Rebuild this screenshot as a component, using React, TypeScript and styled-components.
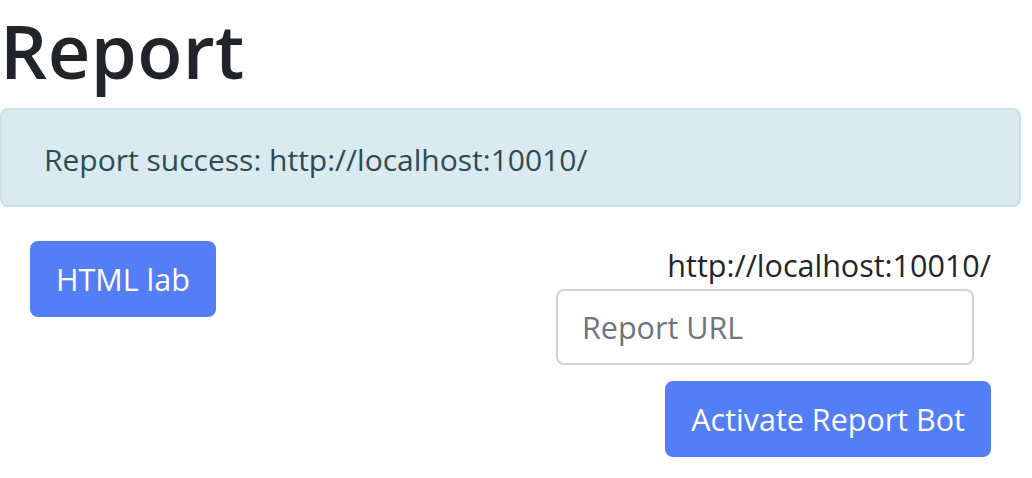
import React from "react";
import styled, { createGlobalStyle } from "styled-components";

const Global = createGlobalStyle`
  html, body { margin: 0; padding: 0; background: #ffffff; }
  body {
    font-family: "Open Sans", "Noto Sans", "Liberation Sans", sans-serif;
    color: #212529;
  }
  * { box-sizing: border-box; }
`;

const Page = styled.div`
  width: 1021px;
  display: flex;
  flex-direction: column;
`;

const Title = styled.h1`
  margin: 0 0 7px 0;
  font-size: 74px;
  font-weight: 600;
  line-height: 101px;
  color: #212529;
  letter-spacing: 0.4px;
`;

const Alert = styled.div`
  height: 99px;
  display: flex;
  align-items: center;
  padding: 3px 42px 0 42px;
  background: #d9eaf0;
  border: 2px solid #c8e1e9;
  border-radius: 8px;
  color: #2e4b53;
  font-size: 30px;
`;

const Row = styled.div`
  margin-top: 34px;
  padding: 0 30px;
  display: flex;
  justify-content: space-between;
  align-items: flex-start;
`;

const Button = styled.button`
  font-family: inherit;
  font-size: 30.5px;
  line-height: 48px;
  padding: 12px 24px;
  color: #ffffff;
  background: #547ef5;
  border: 2px solid #547ef5;
  border-radius: 8px;
  cursor: pointer;
`;

const ReportForm = styled.form`
  width: 435px;
  display: flex;
  flex-direction: column;
  align-items: flex-start;
`;

const UrlLabel = styled.div`
  align-self: stretch;
  text-align: right;
  font-size: 30.5px;
  line-height: 48px;
  color: #212529;
`;

const UrlInput = styled.input`
  width: 418px;
  height: 76px;
  padding: 0 24px;
  font-family: inherit;
  font-size: 30.5px;
  color: #212529;
  border: 2px solid #ced4da;
  border-radius: 8px;
  outline: none;
  &::placeholder { color: #6c757d; }
`;

const SubmitButton = styled(Button)`
  align-self: flex-end;
  margin-top: 16px;
`;

export default function App() {
  return (
    <Page>
      <Global />
      <Title>Report</Title>
      <Alert>Report success: http://localhost:10010/</Alert>
      <Row>
        <Button type="button">HTML lab</Button>
        <ReportForm onSubmit={(e) => e.preventDefault()}>
          <UrlLabel>http://localhost:10010/</UrlLabel>
          <UrlInput type="text" placeholder="Report URL" />
          <SubmitButton type="submit">Activate Report Bot</SubmitButton>
        </ReportForm>
      </Row>
    </Page>
  );
}
